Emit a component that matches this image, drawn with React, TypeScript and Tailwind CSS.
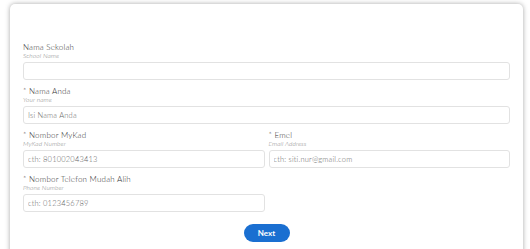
const fields = [
  { label: 'Nama Sekolah', sub: 'School Name', placeholder: '', required: false, full: true },
  { label: 'Nama Anda', sub: 'Your name', placeholder: 'Isi Nama Anda', required: true, full: true },
  { label: 'Nombor MyKad', sub: 'MyKad Number', placeholder: 'cth: 801002043413', required: true, full: false },
  { label: 'Emel', sub: 'Email Address', placeholder: 'cth: siti.nur@gmail.com', required: true, full: false },
  { label: 'Nombor Telefon Mudah Alih', sub: 'Phone Number', placeholder: 'cth: 0123456789', required: true, full: false },
];

const Field = ({ f }: { f: (typeof fields)[number] }) => (
  <div className={f.full ? 'col-span-2 mb-[6px]' : 'mb-[6px]'}>
    <div className="h-[10px] text-[8px] font-light leading-[10px] tracking-[0.2px] text-[#333]">
      {f.required && '* '}
      {f.label}
    </div>
    <div className="h-[8px] text-[6.5px] font-light leading-[8px] italic tracking-[0.1px] text-[#888]">{f.sub}</div>
    <input
      placeholder={f.placeholder}
      className="mt-[2px] block h-[18px] w-full rounded-[3px] border border-[#e2e2e2] bg-white px-[4px] text-[7.5px] font-light tracking-[0.2px] text-[#555] outline-none placeholder:text-[#666]"
    />
  </div>
);

export default function App() {
  return (
    <div className="h-[249px] overflow-hidden bg-white pl-[10px] pr-[7px] pt-[4px] font-['Lato',sans-serif]">
      <div className="rounded-[5px] bg-white px-[13px] pb-[20px] pt-[38px] shadow-[0_0_5px_rgba(0,0,0,0.35)]">
        <div className="grid grid-cols-2 gap-x-[4px]">
          {fields.map((f) => (
            <Field key={f.label} f={f} />
          ))}
        </div>
        <div className="mt-[6px] flex justify-center">
          <button className="h-[18px] w-[46px] rounded-full bg-[#1a6fd1] text-[8px] font-bold text-white">
            Next
          </button>
        </div>
      </div>
    </div>
  );
}
